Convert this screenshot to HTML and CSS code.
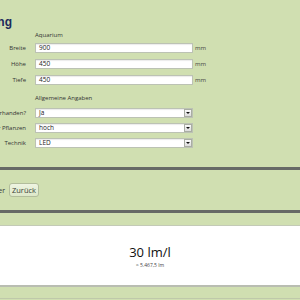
FILE: index.html
```html
<!DOCTYPE html>
<html lang="de">
<head>
    <meta charset="UTF-8">
    <meta name="viewport" content="width=device-width, initial-scale=1.0">
    <title>Beleuchtung</title>
    <link rel="stylesheet" href="styles.css">
</head>
<body>
    <h1 class="title"><span>Beleuchtung</span></h1>

    <div class="section-title">Aquarium</div>
    <div class="fields">
        <div class="label"><span>Breite</span></div>
        <div class="input">900</div>
        <div class="unit">mm</div>

        <div class="label"><span>Höhe</span></div>
        <div class="input">450</div>
        <div class="unit">mm</div>

        <div class="label"><span>Tiefe</span></div>
        <div class="input">450</div>
        <div class="unit">mm</div>
    </div>

    <div class="section-title second">Allgemeine Angaben</div>
    <div class="fields selects">
        <div class="label"><span>CO2 vorhanden?</span></div>
        <div class="input select">Ja<span class="arrow"></span></div>
        <div class="unit"></div>

        <div class="label"><span>Bedarf der Pflanzen</span></div>
        <div class="input select">hoch<span class="arrow"></span></div>
        <div class="unit"></div>

        <div class="label"><span>Technik</span></div>
        <div class="input select">LED<span class="arrow"></span></div>
        <div class="unit"></div>
    </div>

    <div class="bar"></div>

    <div class="actions">
        <div class="cut"><span>Weiter</span></div>
        <button type="button">Zurück</button>
    </div>

    <div class="bar second"></div>

    <div class="result">
        <div class="value">30 lm/l</div>
        <div class="sub">≈ 5.467,5 lm</div>
    </div>

    <div class="foot"></div>
</body>
</html>
```

FILE: styles.css
```css
body {
    margin: 0;
    padding: 0;
    background-color: #d0dfb1;
    font-family: "Open Sans", Arial, sans-serif;
    font-size: 6px;
    color: #333;
    overflow: hidden;
}
.title {
    margin: 0;
    padding-top: 15px;
    width: 12px;
    height: 14px;
    display: flex;
    justify-content: flex-end;
    font-family: "Liberation Sans Narrow", "Liberation Sans", sans-serif;
    font-size: 12px;
    line-height: 14px;
    color: #1d2a5c;
    white-space: nowrap;
}
.section-title {
    margin-top: 1px;
    padding-left: 35px;
    line-height: 10px;
    color: #333;
}
.section-title.second {
    margin-top: 8px;
}
.fields {
    margin-top: 3px;
    display: grid;
    grid-template-columns: 35px 158px auto;
    grid-auto-rows: 10px;
    row-gap: 6px;
    align-items: center;
}
.fields.selects {
    margin-top: 5px;
    row-gap: 5px;
}
.label {
    display: flex;
    justify-content: flex-end;
    padding-right: 9px;
    white-space: nowrap;
    color: #333;
}
.input {
    height: 10px;
    box-sizing: border-box;
    background-color: white;
    border: 1px solid #bcc2b4;
    box-shadow: inset 0 1px 1px rgba(0, 0, 0, 0.08);
    padding-left: 3px;
    line-height: 8px;
    font-size: 6.5px;
    color: #222;
    position: relative;
}
.unit {
    padding-left: 2px;
    color: #444;
}
.arrow {
    position: absolute;
    right: 0;
    top: 0;
    width: 6px;
    height: 6px;
    border: 1px solid #a9ada4;
    background: linear-gradient(#fafafa, #dcdcdc);
}
.arrow::after {
    content: "";
    position: absolute;
    left: 1px;
    top: 2px;
    border-left: 2px solid transparent;
    border-right: 2px solid transparent;
    border-top: 2px solid #111;
}
.bar {
    margin-top: 19px;
    height: 3px;
    background-color: #676a66;
}
.bar.second {
    margin-top: 13px;
}
.actions {
    margin-top: 13px;
    display: flex;
    align-items: center;
    height: 14px;
}
.cut {
    width: 5px;
    display: flex;
    justify-content: flex-end;
    white-space: nowrap;
    margin-right: 4px;
    font-size: 7px;
}
button {
    height: 14px;
    width: 30px;
    padding: 0;
    font-family: "Open Sans", Arial, sans-serif;
    font-size: 7.5px;
    color: #3a3f36;
    background: linear-gradient(#eef4e2, #dde8c8);
    border: 1px solid #b2bd9c;
    border-radius: 3px;
}
.result {
    margin-top: 12px;
    background-color: white;
    border-top: 1px solid #c3cab6;
    border-bottom: 2px solid #b9bdb2;
    height: 59px;
    text-align: center;
    color: #111;
}
.value {
    padding-top: 17px;
    font-size: 13px;
    line-height: 18px;
}
.sub {
    font-size: 5px;
    line-height: 8px;
    color: #444;
}
.foot {
    margin-top: 11px;
    height: 1px;
    background-color: #bfc9aa;
}
```
